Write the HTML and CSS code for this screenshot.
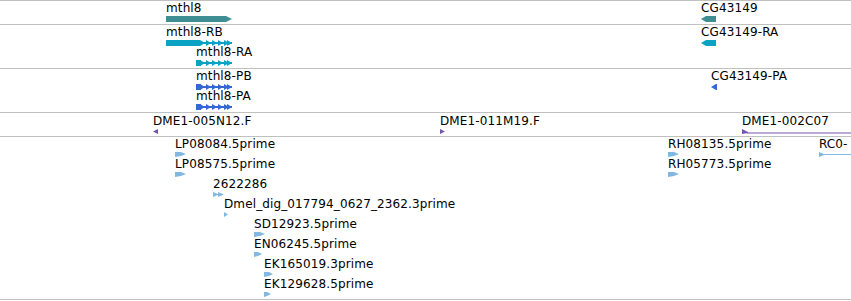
FILE: index.html
```html
<!DOCTYPE html>
<html lang="en">
<head>
    <meta charset="UTF-8">
    <title>Annotation tracks</title>
    <link rel="stylesheet" href="styles.css">
</head>
<body>
    <div id="tracks">
        <!-- genes -->
        <div class="track track-gene">
            <div class="feat" style="left:166px;top:0px">
                <span class="lbl">mthl8</span>
                <svg width="66" height="6"><polygon class="gene" points="0,0 60,0 66,3 60,6 0,6"/></svg>
            </div>
            <div class="feat" style="left:701px;top:0px">
                <span class="lbl">CG43149</span>
                <svg width="15" height="6"><polygon class="gene" points="0,3 5,0 15,0 15,6 5,6"/></svg>
            </div>
        </div>

        <!-- transcripts -->
        <div class="track track-mrna">
            <div class="feat" style="left:166px;top:0px">
                <span class="lbl">mthl8-RB</span>
                <svg width="66" height="6">
                    <rect class="mrna" x="0" y="0" width="34" height="6"/>
                    <rect class="mrna" x="34" y="2" width="32" height="2"/>
                    <polygon class="mrna" points="34,0 39,3 34,6"/>
                    <polygon class="mrna" points="40,0 45,3 40,6"/>
                    <polygon class="mrna" points="46,0 51,3 46,6"/>
                    <polygon class="mrna" points="52,0 57,3 52,6"/>
                    <polygon class="mrna" points="58,0 63,3 58,6"/>
                    <polygon class="mrna" points="61,0 66,3 61,6"/>
                </svg>
            </div>
            <div class="feat" style="left:196px;top:20px">
                <span class="lbl">mthl8-RA</span>
                <svg width="36" height="6">
                    <rect class="mrna" x="0" y="0" width="5" height="6"/>
                    <rect class="mrna" x="5" y="2" width="31" height="2"/>
                    <polygon class="mrna" points="4,0 9,3 4,6"/>
                    <polygon class="mrna" points="10,0 15,3 10,6"/>
                    <polygon class="mrna" points="16,0 21,3 16,6"/>
                    <polygon class="mrna" points="22,0 27,3 22,6"/>
                    <polygon class="mrna" points="28,0 33,3 28,6"/>
                    <polygon class="mrna" points="31,0 36,3 31,6"/>
                </svg>
            </div>
            <div class="feat" style="left:701px;top:0px">
                <span class="lbl">CG43149-RA</span>
                <svg width="15" height="6"><polygon class="mrna" points="0,3 5,0 15,0 15,6 5,6"/></svg>
            </div>
        </div>

        <!-- polypeptides -->
        <div class="track track-pep">
            <div class="feat" style="left:196px;top:0px">
                <span class="lbl">mthl8-PB</span>
                <svg width="36" height="6">
                    <rect class="pep" x="0" y="0" width="5" height="6"/>
                    <rect class="pep" x="5" y="2" width="31" height="2"/>
                    <polygon class="pep" points="4,0 9,3 4,6"/>
                    <polygon class="pep" points="10,0 15,3 10,6"/>
                    <polygon class="pep" points="16,0 21,3 16,6"/>
                    <polygon class="pep" points="22,0 27,3 22,6"/>
                    <polygon class="pep" points="28,0 33,3 28,6"/>
                    <polygon class="pep" points="31,0 36,3 31,6"/>
                </svg>
            </div>
            <div class="feat" style="left:196px;top:20px">
                <span class="lbl">mthl8-PA</span>
                <svg width="36" height="6">
                    <rect class="pep" x="0" y="0" width="5" height="6"/>
                    <rect class="pep" x="5" y="2" width="31" height="2"/>
                    <polygon class="pep" points="4,0 9,3 4,6"/>
                    <polygon class="pep" points="10,0 15,3 10,6"/>
                    <polygon class="pep" points="16,0 21,3 16,6"/>
                    <polygon class="pep" points="22,0 27,3 22,6"/>
                    <polygon class="pep" points="28,0 33,3 28,6"/>
                    <polygon class="pep" points="31,0 36,3 31,6"/>
                </svg>
            </div>
            <div class="feat" style="left:711px;top:0px">
                <span class="lbl">CG43149-PA</span>
                <svg width="6" height="6"><polygon class="pep" points="0,3 5,0 6,0 6,6 5,6"/></svg>
            </div>
        </div>

        <!-- BAC ends -->
        <div class="track track-bac">
            <div class="feat" style="left:153px;top:1px">
                <span class="lbl">DME1-005N12.F</span>
                <svg width="6" height="5"><polygon class="bac" points="0,2.5 5,0 5,5"/></svg>
            </div>
            <div class="feat" style="left:440px;top:1px">
                <span class="lbl">DME1-011M19.F</span>
                <svg width="6" height="5"><polygon class="bac" points="0,0 5,2.5 0,5"/></svg>
            </div>
            <div class="feat" style="left:742px;top:1px">
                <span class="lbl">DME1-002C07</span>
                <svg width="109" height="5">
                    <polygon class="bac" points="0,0 6,3 6,4 0,5"/>
                    <rect class="bac" x="5" y="3.5" width="104" height="1"/>
                </svg>
            </div>
        </div>

        <!-- ESTs -->
        <div class="track track-est">
            <div class="feat" style="left:175px;top:0px">
                <span class="lbl">LP08084.5prime</span>
                <svg width="12" height="5"><polygon class="est" points="0,0 6,0 11,2 6,4 0,5"/></svg>
            </div>
            <div class="feat" style="left:175px;top:20px">
                <span class="lbl">LP08575.5prime</span>
                <svg width="12" height="5"><polygon class="est" points="0,0 6,0 11,2 6,4 0,5"/></svg>
            </div>
            <div class="feat" style="left:213px;top:40px">
                <span class="lbl">2622286</span>
                <svg width="12" height="5">
                    <polygon class="est" points="0,0 6,2.5 0,5"/>
                    <polygon class="est" points="5,0 11,2.5 5,5"/>
                </svg>
            </div>
            <div class="feat" style="left:224px;top:60px">
                <span class="lbl">Dmel_dig_017794_0627_2362.3prime</span>
                <svg width="5" height="5"><polygon class="est" points="0,0 4,2.5 0,5"/></svg>
            </div>
            <div class="feat" style="left:254px;top:80px">
                <span class="lbl">SD12923.5prime</span>
                <svg width="12" height="5"><polygon class="est" points="0,0 6,0 11,2 6,4 0,5"/></svg>
            </div>
            <div class="feat" style="left:254px;top:100px">
                <span class="lbl">EN06245.5prime</span>
                <svg width="9" height="5"><polygon class="est" points="0,0 4,0 8,2 4,4 0,5"/></svg>
            </div>
            <div class="feat" style="left:264px;top:120px">
                <span class="lbl">EK165019.3prime</span>
                <svg width="10" height="5"><polygon class="est" points="0,0 5,0 9,2 5,4 0,5"/></svg>
            </div>
            <div class="feat" style="left:264px;top:140px">
                <span class="lbl">EK129628.5prime</span>
                <svg width="8" height="5"><polygon class="est" points="0,0 3,0 7,2 3,4 0,5"/></svg>
            </div>
            <div class="feat" style="left:668px;top:0px">
                <span class="lbl">RH08135.5prime</span>
                <svg width="12" height="5"><polygon class="est" points="0,0 6,0 11,2 6,4 0,5"/></svg>
            </div>
            <div class="feat" style="left:668px;top:20px">
                <span class="lbl">RH05773.5prime</span>
                <svg width="12" height="5"><polygon class="est" points="0,0 6,0 11,2 6,4 0,5"/></svg>
            </div>
            <div class="feat" style="left:819px;top:0px">
                <span class="lbl">RC0-</span>
                <svg width="32" height="5">
                    <polygon class="est" points="0,0 5,2 5,3 0,5"/>
                    <rect class="est" x="4" y="2" width="28" height="1"/>
                </svg>
            </div>
        </div>
    </div>
</body>
</html>
```

FILE: styles.css
```css
html, body {
    margin: 0;
    padding: 0;
    background: #fff;
    overflow: hidden;
}
body {
    font-family: "DejaVu Sans", sans-serif;
    font-size: 12px;
    letter-spacing: 0.12px;
    color: #000;
}
#tracks {
    width: 851px;
    border-top: 1px solid #c0c0c0;
}
.track {
    position: relative;
    border-bottom: 1px solid #c0c0c0;
    overflow: hidden;
}
.track-gene { height: 23px; }
.track-mrna { height: 43px; }
.track-pep  { height: 43px; }
.track-bac  { height: 23px; }
.track-est  { height: 162px; }

.feat {
    position: absolute;
    padding-top: 1px;
}
.lbl {
    display: block;
    line-height: 13px;
    height: 13px;
    white-space: nowrap;
}
.feat svg {
    display: block;
    margin-top: 1px;
    overflow: visible;
}
.gene { fill: #3e8e93; }
.mrna { fill: #0ba3c4; }
.pep  { fill: #3468d2; }
.bac  { fill: #7454ac; }
.est  { fill: #82b8e0; }
```
